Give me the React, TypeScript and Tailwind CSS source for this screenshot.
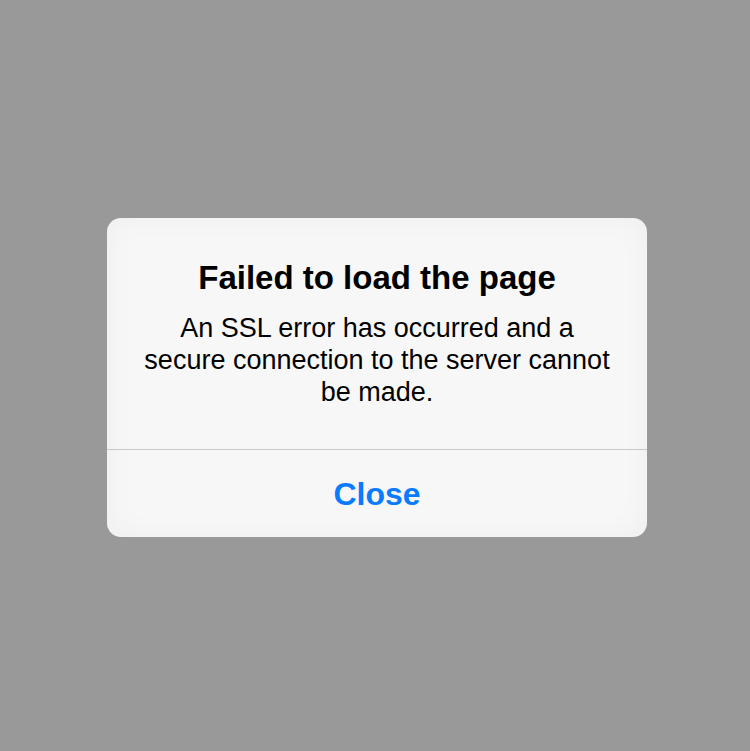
export default function App() {
  return (
    <div
      className="w-[750px] h-[751px] bg-[#999999] flex items-center justify-center"
      style={{ fontFamily: '"Liberation Sans", Arial, sans-serif' }}
    >
      <div className="w-[540px] mt-[3px] ml-[4px] rounded-[14px] bg-[#f7f7f7] shadow-[inset_0_0_30px_rgba(0,0,0,0.04)] flex flex-col overflow-hidden">
        <div className="pt-[42px] pb-[41px] px-4 flex flex-col items-center text-center">
          <h1 className="text-[33px] leading-[36px] font-bold text-black">
            Failed to load the page
          </h1>
          <p className="mt-[16px] text-[27px] leading-[32px] text-black whitespace-nowrap">
            An SSL error has occurred and a
            <br />
            secure connection to the server cannot
            <br />
            be made.
          </p>
        </div>
        <div className="h-px bg-[#c8c8c8]" />
        <button className="h-[87px] pt-[2px] flex items-center justify-center text-[32px] font-bold text-[#0a7aff]">
          Close
        </button>
      </div>
    </div>
  );
}
